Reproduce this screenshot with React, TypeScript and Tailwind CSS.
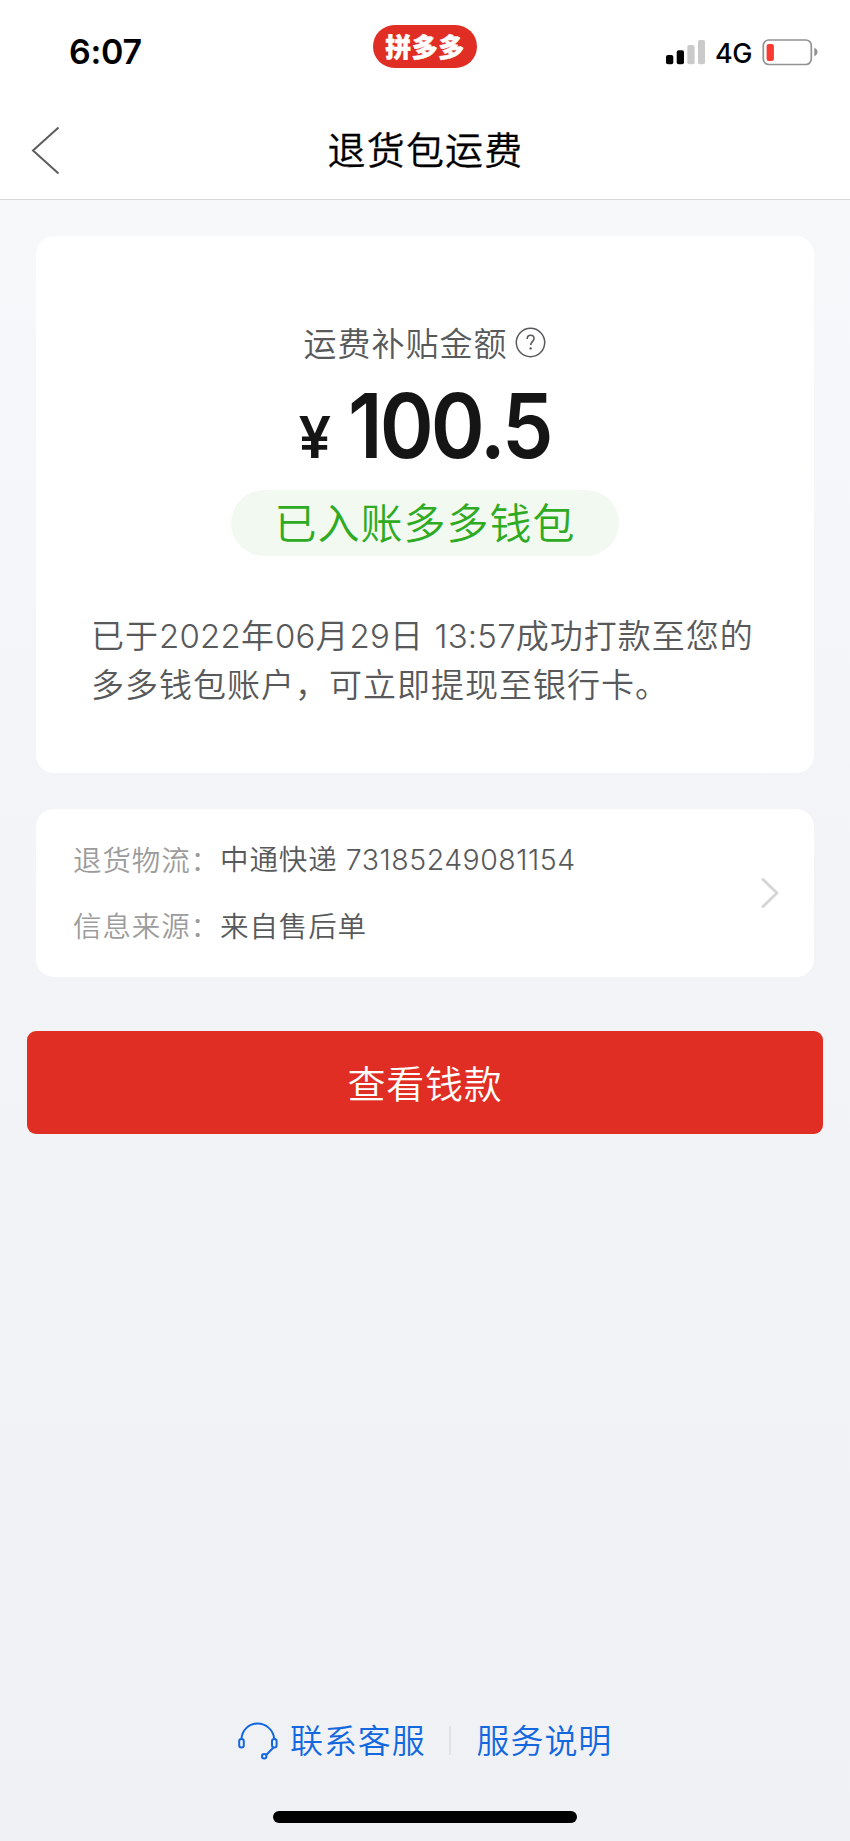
import React from "react";

function SignalBars() {
  return (
    <svg width="39" height="25" viewBox="0 0 39 25" className="shrink-0">
      <rect x="0" y="15" width="7.3" height="9.3" rx="2" fill="#000" />
      <rect x="10.7" y="10.3" width="7.3" height="14" rx="2" fill="#000" />
      <rect x="21.3" y="5" width="7.3" height="19.3" rx="2" fill="#cacaca" />
      <rect x="32" y="0" width="7" height="24.3" rx="2" fill="#cacaca" />
    </svg>
  );
}

function Battery() {
  return (
    <svg width="57" height="27" viewBox="0 0 57 27" className="shrink-0">
      <rect x="1.300" y="1" width="48" height="24.500" rx="5.500" fill="none" stroke="#929292" strokeWidth="1.700" />
      <rect x="4.600" y="4.900" width="7.300" height="17" rx="2.200" fill="#f93a30" />
      <path d="M52.300 8.800c2 .6 3.200 2.200 3.200 4.200s-1.200 3.600-3.200 4.200z" fill="#929292" />
    </svg>
  );
}

function StatusBar() {
  return (
    <div className="flex h-[100px] shrink-0 items-start">
      <div className="w-[373px] pt-[32px] pl-[69px] font-['Inter'] text-[34px] leading-[40px] font-semibold tracking-[-0.3px] text-black">
        6:07
      </div>
      <div className="mt-[25px] flex h-[43px] w-[104px] items-center justify-center rounded-full bg-[#e02e24] text-[26px] leading-[43px] font-black tracking-[0.5px] text-white">
        <span className="-mt-[3px] [-webkit-text-stroke:0.5px_white]">拼多多</span>
      </div>
      <div className="mt-[39px] ml-[189px] flex h-[27px] items-center">
        <SignalBars />
        <span className="ml-[10px] w-[47px] pt-[2px] font-['Inter'] text-[27px] leading-[27px] font-medium tracking-[-0.5px] text-black">
          4G
        </span>
        <Battery />
      </div>
    </div>
  );
}

function Header() {
  return (
    <header className="flex h-[100px] shrink-0 items-center border-b border-[#dadadc] bg-white">
      <div className="w-[150px] pl-[31px]">
        <svg width="29" height="48" viewBox="0 0 29 48" fill="none" stroke="#5c5c5c" strokeWidth="2">
          <path d="M27.500 1.500 2 24.500l25.500 23" />
        </svg>
      </div>
      <h1 className="flex-1 pb-[3px] pl-px text-center text-[38px] leading-[60px] font-[350] tracking-[1.200px] text-black [-webkit-text-stroke:0.3px_black]">
        退货包运费
      </h1>
      <div className="w-[150px]" />
    </header>
  );
}

function RefundCard() {
  return (
    <section className="mt-[36px] flex h-[537px] flex-col items-center rounded-[18px] bg-white pt-[82px]">
      <div className="-ml-[1px] flex h-[48px] items-center">
        <span className="text-[33px] leading-[48px] tracking-[1px] text-[#58595b]">运费补贴金额</span>
        <svg width="31" height="31" viewBox="0 0 31 31" className="ml-[7px]" fill="none" stroke="#58595b">
          <circle cx="15.500" cy="15.500" r="14.200" strokeWidth="1.500" />
          <path d="M12.200 11.900c0-2.300 1.400-3.600 3.400-3.600s3.400 1.300 3.400 3.200c0 3-3.300 3.300-3.300 6.600" strokeWidth="1.600" />
          <circle cx="15.600" cy="21.400" r="1.200" fill="#58595b" stroke="none" />
        </svg>
      </div>
      <div className="mt-[12px] flex h-[98px] items-baseline font-['Inter'] text-[#151516]">
        <span className="w-[38px] text-[58px] leading-[96px] font-[570]">¥</span>
        <span className="ml-[11px] w-[204px] origin-left scale-x-[0.91] text-[90px] leading-[96px] font-[570] tracking-[-3.200px] whitespace-nowrap">
          100.5
        </span>
      </div>
      <div className="mt-[14px] flex h-[66px] w-[388px] items-center justify-center rounded-full bg-[#f1f9f1] pb-[5px] text-[42px] leading-[60px] tracking-[1px] text-[#2eab23]">
        已入账多多钱包
      </div>
      <p className="mt-[55px] w-full pl-[55px] text-[33px] leading-[47px] tracking-[1px] text-[#58595b]">
        <span className="block whitespace-nowrap [word-spacing:2px]">
          已于<Num>2022</Num>年<Num>06</Num>月<Num>29</Num>日 <Num>13:57</Num>成功打款至您的
        </span>
        <span className="block">多多钱包账户，可立即提现至银行卡。</span>
      </p>
    </section>
  );
}

function Num({ children }: { children: React.ReactNode }) {
  return <span className="font-['Inter'] tracking-[0.200px]">{children}</span>;
}

function InfoRow({ label, children }: { label: string; children: React.ReactNode }) {
  return (
    <div className="flex h-[66px] items-center text-[28.500px] leading-[66px] tracking-[0.900px]">
      <span className="w-[147px] whitespace-nowrap text-[#9c9c9c]">{label}：</span>
      <span className="whitespace-nowrap text-[#58595b]">{children}</span>
    </div>
  );
}

function LogisticsCard() {
  return (
    <section className="mt-[36px] flex h-[168px] items-center justify-between rounded-[18px] bg-white pr-[35px] pl-[37px]">
      <div className="pb-[2px]">
        <InfoRow label="退货物流">
          中通快递 <span className="ml-px font-['Inter'] tracking-[0.500px]">73185249081154</span>
        </InfoRow>
        <InfoRow label="信息来源">来自售后单</InfoRow>
      </div>
      <svg width="18" height="31" viewBox="0 0 18 31" fill="none" stroke="#d6d6d6" strokeWidth="3" strokeLinecap="round" strokeLinejoin="round">
        <path d="M2 1.500l14 13.500L2 28.500" />
      </svg>
    </section>
  );
}

function Footer() {
  return (
    <footer className="mt-auto flex h-[136px] flex-col">
      <div className="flex h-[71px] items-center pl-[238px] text-[33px] leading-[68px] tracking-[0.900px] text-[#1468df]">
        <svg width="40" height="38" viewBox="0 0 40 38" fill="none" stroke="#1468df" strokeWidth="2">
          <path d="M3.500 17C4 8 11 1.500 19.500 1.500S35.500 8 36.200 17" />
          <rect x="1.200" y="17" width="4.600" height="8.600" rx="2.300" />
          <rect x="34" y="17" width="4.600" height="8.600" rx="2.300" />
          <path d="M35.500 25.500 28.200 33" />
          <circle cx="26.200" cy="34.300" r="2.200" />
        </svg>
        <a className="ml-[12px] pb-[3px] whitespace-nowrap">联系客服</a>
        <span className="ml-[23px] h-[29px] w-[2px] bg-[#e1e2e6]" />
        <a className="ml-[26px] pb-[3px] whitespace-nowrap">服务说明</a>
      </div>
      <div className="mx-auto mt-[35px] h-[12px] w-[304px] rounded-full bg-black" />
    </footer>
  );
}

export default function App() {
  return (
    <div className="flex h-[1841px] w-[850px] flex-col overflow-hidden bg-white font-['Noto_Sans_CJK_SC',sans-serif] font-[350]">
      <StatusBar />
      <Header />
      <main className="flex flex-1 flex-col bg-linear-to-b from-[#f7f8fa] via-[#f3f4f8] via-40% to-[#f0f1f5]">
        <div className="px-[36px]">
          <RefundCard />
          <LogisticsCard />
        </div>
        <button className="mx-[27px] mt-[54px] h-[103px] rounded-[9px] bg-[#e02e24] pb-[3px] text-[38px] tracking-[0.800px] text-white">
          查看钱款
        </button>
        <Footer />
      </main>
    </div>
  );
}
